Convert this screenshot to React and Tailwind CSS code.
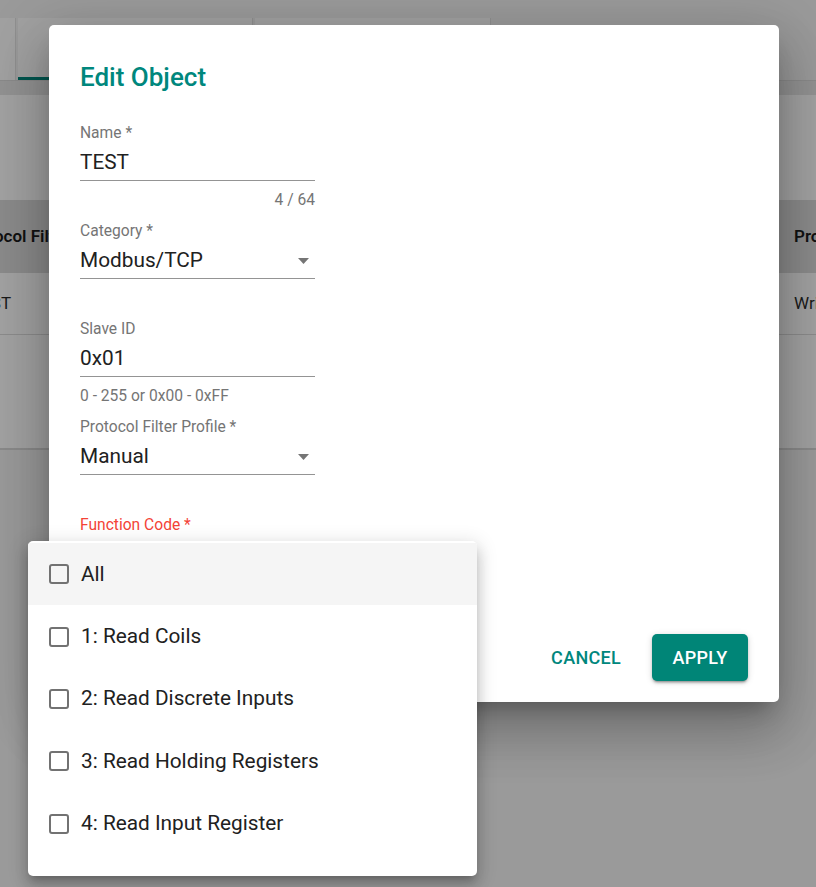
import React from "react";

function Arrow() {
  return (
    <svg width="11" height="6" viewBox="0 0 11 6" className="mr-[6px] shrink-0">
      <path d="M0 0 L11 0 L5.5 6 Z" fill="#757575" />
    </svg>
  );
}

function Field({ label, value, select, helper, counter }) {
  return (
    <div className="h-[98px] w-[235px]">
      <div className="h-[20px] pt-[1px] leading-[20px] text-[15.6px] text-[#757575]">{label}</div>
      <div className="h-[39px] pt-[3px] flex items-center justify-between border-b border-[#949494] text-[20.8px] text-[#212121]">
        <span>{value}</span>
        {select && <Arrow />}
      </div>
      {helper && (
        <div className="mt-[8px] h-[20px] pt-[1px] leading-[20px] text-[15.6px] text-[#757575]">{helper}</div>
      )}
      {counter && (
        <div className="mt-[8px] h-[20px] pt-[1px] leading-[20px] text-[15.6px] text-[#757575] text-right">{counter}</div>
      )}
    </div>
  );
}

function Item({ label, active }) {
  return (
    <div className={`h-[62.4px] flex items-center pl-[21px] gap-[12px] ${active ? "bg-[#f5f5f5]" : "bg-white"}`}>
      <div className="w-[20px] h-[20px] border-2 border-[#727272] rounded-[3px] box-border" />
      <span className="text-[20.8px] text-[#212121]">{label}</span>
    </div>
  );
}

export default function App() {
  return (
    <div className="relative w-[816px] h-[887px] overflow-hidden bg-[#9a9a9a] font-['Roboto',sans-serif]">
      {/* background page (dimmed) */}
      <div className="h-[18px]" />
      <div className="flex h-[63px] border-b border-[#8a8a8a]">
        <div className="w-[16px] bg-[#a1a1a1] border-r border-[#8f8f8f]" />
        <div className="ml-[2px] w-[235px] bg-[#a1a1a1] border-r border-[#8f8f8f] flex flex-col justify-end">
          <div className="h-[3px] bg-[#00564f]" />
        </div>
        <div className="ml-[2px] w-[236px] bg-[#a1a1a1] border-r border-[#8f8f8f]" />
      </div>
      <div className="h-[14px] bg-[#929292]" />
      <div className="h-[355px] bg-[#a2a2a2] pt-[105px] border-b-2 border-[#8a8a8a]">
        <div className="h-[73px] bg-[#8b8b8b] flex items-center text-[17px] font-semibold text-[#111]">
          <div className="w-[794px] shrink-0 overflow-hidden">
            <span className="block ml-[-38px] whitespace-nowrap">Protocol Filter Profile</span>
          </div>
          <span className="whitespace-nowrap">Protocol</span>
        </div>
        <div className="h-[62px] border-b border-[#8c8c8c] flex items-center text-[17px] text-[#1a1a1a]">
          <div className="w-[794px] shrink-0 overflow-hidden">
            <span className="block ml-[-29px] whitespace-nowrap">TEST</span>
          </div>
          <span className="whitespace-nowrap">Write</span>
        </div>
      </div>

      {/* dialog */}
      <div className="absolute left-[49px] top-[25px] w-[730px] h-[677px] rounded-[5px] bg-white flex flex-col pt-[36px] px-[31px] pb-[21px] shadow-[0_14px_19px_-9px_rgba(0,0,0,0.25),0_31px_49px_4px_rgba(0,0,0,0.16),0_12px_60px_10px_rgba(0,0,0,0.14)]">
        <div className="h-[32px] leading-[32px] text-[26px] font-medium text-[#00877d]">Edit Object</div>
        <div className="mt-[29px]">
          <Field label="Name *" value="TEST" counter="4 / 64" />
          <Field label="Category *" value="Modbus/TCP" select />
          <Field label="Slave ID" value="0x01" helper="0 - 255 or 0x00 - 0xFF" />
          <Field label="Protocol Filter Profile *" value="Manual" select />
          <div className="h-[20px] pt-[1px] leading-[20px] text-[15.6px] text-[#f44336]">Function Code *</div>
        </div>
        <div className="flex-1" />
        <div className="flex justify-end items-center gap-[15px]">
          <button className="h-[47px] px-[16px] text-[18px] font-medium tracking-[0.3px] text-[#00877d] uppercase">
            Cancel
          </button>
          <button className="h-[47px] w-[96px] rounded-[5px] bg-[#008577] text-white text-[18px] font-medium tracking-[0.3px] uppercase shadow-[0_3px_2px_-2px_rgba(0,0,0,0.25),0_2px_3px_0_rgba(0,0,0,0.18),0_1px_7px_0_rgba(0,0,0,0.14)]">
            Apply
          </button>
        </div>
      </div>

      {/* dropdown menu */}
      <div className="absolute left-[28px] top-[541px] w-[449px] h-[335px] rounded-[5px] bg-white pt-[2px] overflow-hidden shadow-[0_6px_7px_-4px_rgba(0,0,0,0.2),0_10px_14px_1px_rgba(0,0,0,0.14),0_4px_19px_3px_rgba(0,0,0,0.12)]">
        <Item label="All" active />
        <Item label="1: Read Coils" />
        <Item label="2: Read Discrete Inputs" />
        <Item label="3: Read Holding Registers" />
        <Item label="4: Read Input Register" />
      </div>
    </div>
  );
}
